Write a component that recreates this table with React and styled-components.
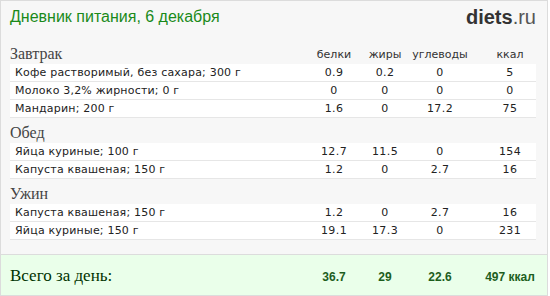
import React from 'react';
import styled, { createGlobalStyle } from 'styled-components';

const GlobalStyle = createGlobalStyle`
  html, body {
    margin: 0;
    padding: 0;
    background: #ffffff;
  }
`;

const sections = [
  {
    title: 'Завтрак',
    items: [
      ['Кофе растворимый, без сахара; 300 г', '0.9', '0.2', '0', '5'],
      ['Молоко 3,2% жирности; 0 г', '0', '0', '0', '0'],
      ['Мандарин; 200 г', '1.6', '0', '17.2', '75'],
    ],
  },
  {
    title: 'Обед',
    items: [
      ['Яйца куриные; 100 г', '12.7', '11.5', '0', '154'],
      ['Капуста квашеная; 150 г', '1.2', '0', '2.7', '16'],
    ],
  },
  {
    title: 'Ужин',
    items: [
      ['Капуста квашеная; 150 г', '1.2', '0', '2.7', '16'],
      ['Яйца куриные; 150 г', '19.1', '17.3', '0', '231'],
    ],
  },
];

const labels = ['белки', 'жиры', 'углеводы', 'ккал'];
const totals = ['36.7', '29', '22.6', '497 ккал'];

const Panel = styled.div`
  width: 548px;
  height: 296px;
  box-sizing: border-box;
  border: 1px solid #dcdcdc;
  background: #f7f7f7;
  display: flex;
  flex-direction: column;
`;

const Body = styled.div`
  flex: 1;
  padding: 0 11px 0 9px;
`;

const Header = styled.div`
  height: 38px;
  box-sizing: border-box;
  padding-top: 7px;
  display: flex;
  justify-content: space-between;
  align-items: flex-start;
`;

const Title = styled.h1`
  margin: 0;
  font-family: 'Liberation Sans', Arial, sans-serif;
  font-size: 16px;
  line-height: 18px;
  font-weight: normal;
  color: #1a8a1a;
`;

const Logo = styled.div`
  margin-top: -2px;
  font-family: 'Liberation Sans', Arial, sans-serif;
  font-size: 20px;
  line-height: 22px;
  color: #555;

  b {
    color: #333;
  }
`;

const Grid = styled.div`
  display: grid;
  grid-template-columns: 1fr 52px 50px 60px 66px;
  align-items: end;
`;

const SectionHead = styled(Grid)`
  height: 25px;
`;

const SectionTitle = styled.div`
  padding-bottom: 2px;
  font-family: 'Liberation Serif', 'Times New Roman', serif;
  font-size: 16px;
  line-height: 16px;
  color: #444;
`;

const Label = styled.div`
  padding-bottom: 3px;
  padding-left: ${p => (p.$wide ? '14px' : '0')};
  font-family: 'DejaVu Sans', Verdana, sans-serif;
  font-size: 11px;
  line-height: 13px;
  color: #333;
  text-align: center;
  white-space: nowrap;
`;

const Row = styled(Grid)`
  height: 17px;
  background: #ffffff;
  border-bottom: 1px solid #e6e6e6;
  align-items: center;
`;

const Cell = styled.div`
  padding-left: ${p => (p.$name ? '5px' : p.$wide ? '14px' : '0')};
  font-family: 'DejaVu Sans', Verdana, sans-serif;
  font-size: 11px;
  line-height: 16px;
  letter-spacing: ${p => (p.$name ? '0.2px' : '0.4px')};
  color: #222;
  text-align: ${p => (p.$name ? 'left' : 'center')};
  white-space: nowrap;
`;

const Totals = styled(Grid)`
  height: 41px;
  box-sizing: border-box;
  padding: 11px 11px 0 9px;
  background: #eaffea;
  border-top: 1px solid #dcdcdc;
  align-items: baseline;
  align-content: start;
`;

const TotalLabel = styled.div`
  font-family: 'Liberation Serif', 'Times New Roman', serif;
  font-size: 17px;
  line-height: 20px;
  color: #003300;
`;

const TotalValue = styled.div`
  padding-left: ${p => (p.$wide ? '14px' : '0')};
  font-family: 'Liberation Sans', Arial, sans-serif;
  font-size: 12px;
  font-weight: bold;
  color: #1d5e1d;
  text-align: center;
  white-space: nowrap;
`;

export default function App() {
  return (
    <>
      <GlobalStyle />
      <Panel>
        <Body>
          <Header>
            <Title>Дневник питания, 6 декабря</Title>
            <Logo><b>diets</b>.ru</Logo>
          </Header>
          {sections.map((section, si) => (
            <div key={section.title}>
              <SectionHead>
                <SectionTitle>{section.title}</SectionTitle>
                {si === 0 &&
                  labels.map((l, i) => (
                    <Label key={l} $wide={i === 3}>{l}</Label>
                  ))}
              </SectionHead>
              {section.items.map((item, ri) => (
                <Row key={ri}>
                  {item.map((v, ci) => (
                    <Cell key={ci} $name={ci === 0} $wide={ci === 4}>{v}</Cell>
                  ))}
                </Row>
              ))}
            </div>
          ))}
        </Body>
        <Totals>
          <TotalLabel>Всего за день:</TotalLabel>
          {totals.map((t, i) => (
            <TotalValue key={i} $wide={i === 3}>{t}</TotalValue>
          ))}
        </Totals>
      </Panel>
    </>
  );
}
